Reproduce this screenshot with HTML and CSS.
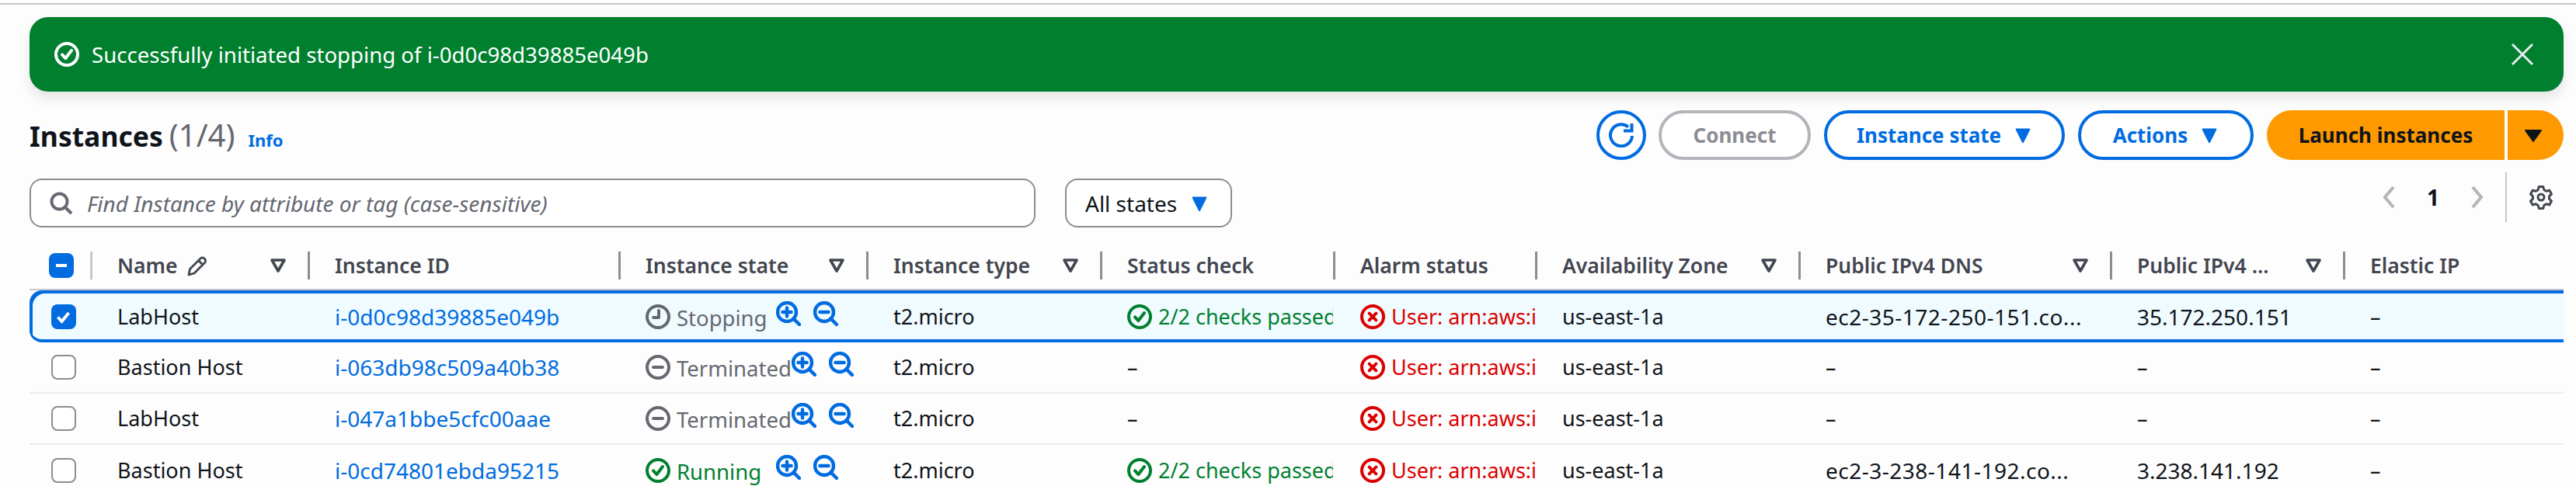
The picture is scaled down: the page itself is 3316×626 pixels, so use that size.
FILE: index.html
```html
<!DOCTYPE html>
<html lang="en">
<head>
  <meta charset="UTF-8">
  <title>Instances</title>
  <link rel="stylesheet" href="styles.css">
</head>
<body>
  <svg class="icon-defs" xmlns="http://www.w3.org/2000/svg">
    <symbol id="i-ok" viewBox="0 0 16 16"><circle cx="8" cy="8" r="7"/><path d="M5 8.2l2.2 2.3L11 5.5"/></symbol>
    <symbol id="i-err" viewBox="0 0 16 16"><circle cx="8" cy="8" r="7"/><path d="M5.8 5.8l4.4 4.4M10.2 5.8l-4.4 4.4"/></symbol>
    <symbol id="i-term" viewBox="0 0 16 16"><circle cx="8" cy="8" r="7"/><path d="M5 8h6"/></symbol>
    <symbol id="i-pend" viewBox="0 0 16 16"><circle cx="8" cy="8" r="7"/><path d="M8.5 4v4.5H5"/></symbol>
    <symbol id="i-zin" viewBox="0 0 16 16"><circle cx="7" cy="7" r="6"/><path d="M4.2 7h5.6M7 4.2v5.6M11.2 11.2L15 15"/></symbol>
    <symbol id="i-zout" viewBox="0 0 16 16"><circle cx="7" cy="7" r="6"/><path d="M4.2 7h5.6M11.2 11.2L15 15"/></symbol>
    <symbol id="i-sort" viewBox="0 0 24 24"><path d="M4 5h16L12 19z"/></symbol>
  </svg>

  <div class="top-line"></div>

  <div class="page">
    <div class="flash">
      <svg class="ic flash-icon"><use href="#i-ok"/></svg>
      <span class="flash-text">Successfully initiated stopping of i-0d0c98d39885e049b</span>
      <svg class="flash-close" viewBox="0 0 30 30"><path d="M2 2l26 26M28 2L2 28"/></svg>
    </div>

    <div class="head-row">
      <div class="title">
        <h1>Instances</h1>
        <span class="count">(1/4)</span>
        <a class="info">Info</a>
      </div>
      <div class="actions">
        <button class="btn btn-icon">
          <svg viewBox="0 0 32 32"><path d="M30 17a14 14 0 1 1-5-11.5"/><path d="M29.5 1v9.5H19"/></svg>
        </button>
        <button class="btn btn-off">Connect</button>
        <button class="btn btn-state">Instance state <svg class="caret" viewBox="0 0 16 16"><path d="M2.5 3h11L8 14z"/></svg></button>
        <button class="btn btn-act">Actions <svg class="caret" viewBox="0 0 16 16"><path d="M2.5 3h11L8 14z"/></svg></button>
        <div class="launch">
          <button class="launch-main">Launch instances</button>
          <button class="launch-drop"><svg class="caret" viewBox="0 0 16 16"><path d="M1.5 4h13L8 13z"/></svg></button>
        </div>
      </div>
    </div>

    <div class="filter-row">
      <div class="search">
        <svg viewBox="0 0 32 32"><circle cx="13.5" cy="13.5" r="10"/><path d="M21 21l8 8"/></svg>
        <span>Find Instance by attribute or tag (case-sensitive)</span>
      </div>
      <div class="select">All states <svg class="caret" viewBox="0 0 16 16"><path d="M2.5 3h11L8 14z"/></svg></div>
      <div class="pager">
        <svg class="chev" viewBox="0 0 20 32"><path d="M15 3L4 16l11 13"/></svg>
        <span class="page-num">1</span>
        <svg class="chev" viewBox="0 0 20 32"><path d="M5 3l11 13L5 29"/></svg>
        <div class="pager-div">
          <svg class="gear" viewBox="0 0 32 32">
            <path d="M13.2 2.5h5.6l1 4 2.9 1.7 4-1.1 2.8 4.8-3 2.9v3.4l3 2.9-2.8 4.8-4-1.1-2.9 1.7-1 4h-5.6l-1-4-2.9-1.7-4 1.1-2.8-4.8 3-2.9v-3.4l-3-2.9 2.8-4.8 4 1.1 2.9-1.7z"/>
            <circle cx="16" cy="16" r="4"/>
          </svg>
        </div>
      </div>
    </div>

    <div class="tbl">
      <div class="tr th">
        <div class="c c-check"><span class="cb cb-on"><svg viewBox="0 0 32 32"><path class="white" d="M9 16h14"/></svg></span></div>
        <div class="c">Name <svg class="pencil" viewBox="0 0 28 28"><path d="M3 26l1.5-7.5L18 5a3.5 3.5 0 0 1 5 0l.5.5a3.5 3.5 0 0 1 0 5L10 24z"/><path d="M15.5 7.5l5.5 5.5"/></svg><svg class="ic sort"><use href="#i-sort"/></svg></div>
        <div class="c">Instance ID</div>
        <div class="c">Instance state<svg class="ic sort"><use href="#i-sort"/></svg></div>
        <div class="c">Instance type<svg class="ic sort"><use href="#i-sort"/></svg></div>
        <div class="c">Status check</div>
        <div class="c">Alarm status</div>
        <div class="c">Availability Zone<svg class="ic sort"><use href="#i-sort"/></svg></div>
        <div class="c">Public IPv4 DNS<svg class="ic sort"><use href="#i-sort"/></svg></div>
        <div class="c">Public IPv4 ...<svg class="ic sort"><use href="#i-sort"/></svg></div>
        <div class="c">Elastic IP</div>
      </div>

      <div class="tr td selected">
        <div class="c c-check"><span class="cb cb-on"><svg viewBox="0 0 32 32"><path class="white" d="M8.5 16.5l5 5.5 9-11"/></svg></span></div>
        <div class="c">LabHost</div>
        <div class="c"><a>i-0d0c98d39885e049b</a></div>
        <div class="c state grey"><svg class="ic st"><use href="#i-pend"/></svg><span class="state-label">Stopping</span><svg class="ic zoom"><use href="#i-zin"/></svg><svg class="ic zoom"><use href="#i-zout"/></svg></div>
        <div class="c">t2.micro</div>
        <div class="c green"><svg class="ic st"><use href="#i-ok"/></svg>2/2 checks passed</div>
        <div class="c red"><svg class="ic st"><use href="#i-err"/></svg>User: arn:aws:i</div>
        <div class="c">us-east-1a</div>
        <div class="c dns">ec2-35-172-250-151.co...</div>
        <div class="c ip">35.172.250.151</div>
        <div class="c">–</div>
      </div>

      <div class="tr td">
        <div class="c c-check"><span class="cb"></span></div>
        <div class="c">Bastion Host</div>
        <div class="c"><a>i-063db98c509a40b38</a></div>
        <div class="c state grey"><svg class="ic st"><use href="#i-term"/></svg><span class="state-label">Terminated</span><svg class="ic zoom"><use href="#i-zin"/></svg><svg class="ic zoom"><use href="#i-zout"/></svg></div>
        <div class="c">t2.micro</div>
        <div class="c">–</div>
        <div class="c red"><svg class="ic st"><use href="#i-err"/></svg>User: arn:aws:i</div>
        <div class="c">us-east-1a</div>
        <div class="c">–</div>
        <div class="c">–</div>
        <div class="c">–</div>
      </div>

      <div class="tr td">
        <div class="c c-check"><span class="cb"></span></div>
        <div class="c">LabHost</div>
        <div class="c"><a>i-047a1bbe5cfc00aae</a></div>
        <div class="c state grey"><svg class="ic st"><use href="#i-term"/></svg><span class="state-label">Terminated</span><svg class="ic zoom"><use href="#i-zin"/></svg><svg class="ic zoom"><use href="#i-zout"/></svg></div>
        <div class="c">t2.micro</div>
        <div class="c">–</div>
        <div class="c red"><svg class="ic st"><use href="#i-err"/></svg>User: arn:aws:i</div>
        <div class="c">us-east-1a</div>
        <div class="c">–</div>
        <div class="c">–</div>
        <div class="c">–</div>
      </div>

      <div class="tr td last">
        <div class="c c-check"><span class="cb"></span></div>
        <div class="c">Bastion Host</div>
        <div class="c"><a>i-0cd74801ebda95215</a></div>
        <div class="c state green"><svg class="ic st"><use href="#i-ok"/></svg><span class="state-label">Running</span><svg class="ic zoom"><use href="#i-zin"/></svg><svg class="ic zoom"><use href="#i-zout"/></svg></div>
        <div class="c">t2.micro</div>
        <div class="c green"><svg class="ic st"><use href="#i-ok"/></svg>2/2 checks passed</div>
        <div class="c red"><svg class="ic st"><use href="#i-err"/></svg>User: arn:aws:i</div>
        <div class="c">us-east-1a</div>
        <div class="c dns">ec2-3-238-141-192.co...</div>
        <div class="c ip">3.238.141.192</div>
        <div class="c">–</div>
      </div>
    </div>
  </div>
</body>
</html>
```

FILE: styles.css
```css
:root {
  --blue: #006ce0;
  --text: #0f141a;
  --head: #424650;
  --grey: #656871;
  --green: #00802f;
  --red: #db0000;
  --line: #8c8c94;
  --cols: 78px 280px 400px 319px 301px 300px 260px 339px 401px 300px 284px;
}

* {
  box-sizing: border-box;
}

html, body {
  height: 100%;
}

body {
  margin: 0;
  overflow: hidden;
  background: #fdfdfd;
  color: var(--text);
  font-family: "Noto Sans", "Open Sans", sans-serif;
  font-size: 28px;
  line-height: 36px;
}

.icon-defs {
  display: none;
}

.ic {
  fill: none;
  stroke: currentColor;
  stroke-width: 2;
  stroke-linecap: round;
  stroke-linejoin: round;
  flex: none;
}

.top-line {
  height: 2px;
  margin-top: 4px;
  background: #c6c6cd;
}

.page {
  padding: 0 16px 0 38px;
}

.flash {
  display: flex;
  align-items: center;
  height: 96px;
  margin-top: 16px;
  padding: 0 38px 0 32px;
  border-radius: 24px;
  background: var(--green);
  color: #fff;
  box-shadow: 0 8px 16px rgba(0, 7, 22, 0.1);
}

.flash-icon {
  width: 32px;
  height: 32px;
}

.flash-text {
  margin-left: 16px;
  flex: 1;
  font-size: 27.6px;
}

.flash-close {
  width: 30px;
  height: 30px;
  fill: none;
  stroke: #e9ebed;
  stroke-width: 3;
}

.head-row {
  display: flex;
  justify-content: space-between;
  align-items: center;
  height: 64px;
  margin-top: 24px;
}

.title {
  display: flex;
  align-items: baseline;
  margin-top: 2px;
}

.title h1 {
  margin: 0;
  font-size: 35.5px;
  line-height: 44px;
  font-weight: 700;
}

.count {
  margin-left: 8px;
  font-size: 40px;
  line-height: 44px;
  color: var(--grey);
}

.info {
  margin-left: 17px;
  font-size: 22px;
  font-weight: 700;
  color: var(--blue);
}

.actions {
  display: flex;
  gap: 17px;
}

.btn {
  display: flex;
  align-items: center;
  justify-content: center;
  gap: 16px;
  height: 64px;
  border: 4px solid var(--blue);
  border-radius: 32px;
  background: #fff;
  color: var(--blue);
  font: 700 26px "Noto Sans", sans-serif;
}

.btn-icon {
  width: 64px;
  padding: 0;
  margin-right: -1px;
}

.btn-icon svg {
  width: 32px;
  height: 32px;
  fill: none;
  stroke: var(--blue);
  stroke-width: 4;
}

.btn-off {
  width: 196px;
  border-color: #b4b4bb;
  color: #8c8c94;
}

.btn-state {
  width: 310px;
}

.btn-act {
  width: 226px;
}

.caret {
  width: 24px;
  height: 24px;
  fill: currentColor;
  stroke: currentColor;
  stroke-width: 1.5;
  stroke-linejoin: round;
  flex: none;
}

.launch {
  display: flex;
  gap: 4px;
}

.launch button {
  height: 64px;
  border: 0;
  background: #ff9900;
  color: var(--text);
  font: 700 26px "Noto Sans", sans-serif;
}

.launch-main {
  width: 306px;
  border-radius: 32px 0 0 32px;
}

.launch-drop {
  display: flex;
  align-items: center;
  justify-content: center;
  width: 72px;
  padding: 0 6px 0 0;
  border-radius: 0 32px 32px 0;
}

.filter-row {
  display: flex;
  height: 64px;
  margin-top: 16px;
  gap: 38px;
}

.search,
.select {
  display: flex;
  align-items: center;
  height: 63px;
  margin-top: 8px;
  border: 2px solid var(--line);
  border-radius: 16px;
  background: #fff;
}

.search {
  width: 1295px;
  padding-left: 23px;
  gap: 17px;
  color: var(--grey);
  font-style: italic;
}

.search svg {
  width: 32px;
  height: 32px;
  fill: none;
  stroke: var(--grey);
  stroke-width: 4;
  flex: none;
}

.select {
  width: 215px;
  padding-left: 24px;
  gap: 17px;
}

.select .caret {
  color: var(--blue);
}

.pager {
  display: flex;
  align-items: center;
  margin-left: auto;
}

.chev {
  width: 20px;
  height: 32px;
  fill: none;
  stroke: #b4b4bb;
  stroke-width: 4;
}

.page-num {
  width: 92px;
  text-align: center;
  font-weight: 700;
}

.pager-div {
  display: flex;
  align-items: center;
  justify-content: center;
  width: 75px;
  height: 64px;
  margin-left: 27px;
  border-left: 2px solid #c6c6cd;
  padding-left: 14px;
}

.gear {
  width: 32px;
  height: 32px;
  fill: none;
  stroke: var(--head);
  stroke-width: 3;
  stroke-linejoin: round;
}

.tbl {
  margin-top: 38px;
}

.tr {
  display: grid;
  grid-template-columns: var(--cols);
  white-space: nowrap;
}

.c {
  display: flex;
  align-items: center;
  overflow: hidden;
  padding-left: 32px;
}

.th {
  height: 50px;
  padding-bottom: 14px;
  border-bottom: 2px solid #c6c6cd;
  align-items: start;
  color: var(--head);
  font-size: 26.5px;
  font-weight: 600;
}

.th .c {
  height: 36px;
  border-left: 3px solid var(--line);
}

.th .c-check,
.td .c-check {
  border: 0;
  padding-left: 25px;
}

.th .c-check + .c {
  border-left-color: #c6c6cd;
}

.td {
  height: 66px;
  border-bottom: 2px solid #e9ebed;
  font-size: 27px;
}

.td .c {
  border-left: 3px solid transparent;
}

.td.last {
  border-bottom: 0;
}

.selected {
  height: 67px;
  border-bottom: 0;
  border-radius: 16px 0 0 16px;
  background: #f0fbff;
  box-shadow: inset 4px 4px 0 var(--blue), inset 0 -4px 0 var(--blue);
}

.c a {
  color: var(--blue);
  font-size: 28px;
}

.ip {
  font-size: 28px;
}

.dns {
  font-size: 28px;
  letter-spacing: 0.5px;
}

.cb {
  display: block;
  flex: none;
  width: 32px;
  height: 32px;
  border: 2px solid var(--line);
  border-radius: 8px;
  background: #fff;
}

.cb-on {
  border: 0;
  background: var(--blue);
}

.cb svg {
  display: block;
  width: 32px;
  height: 32px;
  fill: none;
}

.white {
  stroke: #fff;
  stroke-width: 4;
}

.pencil {
  width: 28px;
  height: 28px;
  margin-left: 12px;
  fill: none;
  stroke: var(--head);
  stroke-width: 2.8;
  stroke-linejoin: round;
  flex: none;
}

.sort {
  width: 24px;
  height: 24px;
  margin-left: auto;
  margin-right: 26px;
  stroke-width: 3.6;
}

.st {
  width: 32px;
  height: 32px;
  margin-right: 8px;
}

.grey {
  color: var(--grey);
}

.green {
  color: var(--green);
}

.red {
  color: var(--red);
}

.state-label {
  min-width: 120px;
  margin-right: 8px;
  padding-top: 4px;
  font-size: 27.5px;
}

.zoom {
  width: 32px;
  height: 32px;
  margin-right: 16px;
  margin-top: -8px;
  color: var(--blue);
  stroke-width: 2.2;
}
```
